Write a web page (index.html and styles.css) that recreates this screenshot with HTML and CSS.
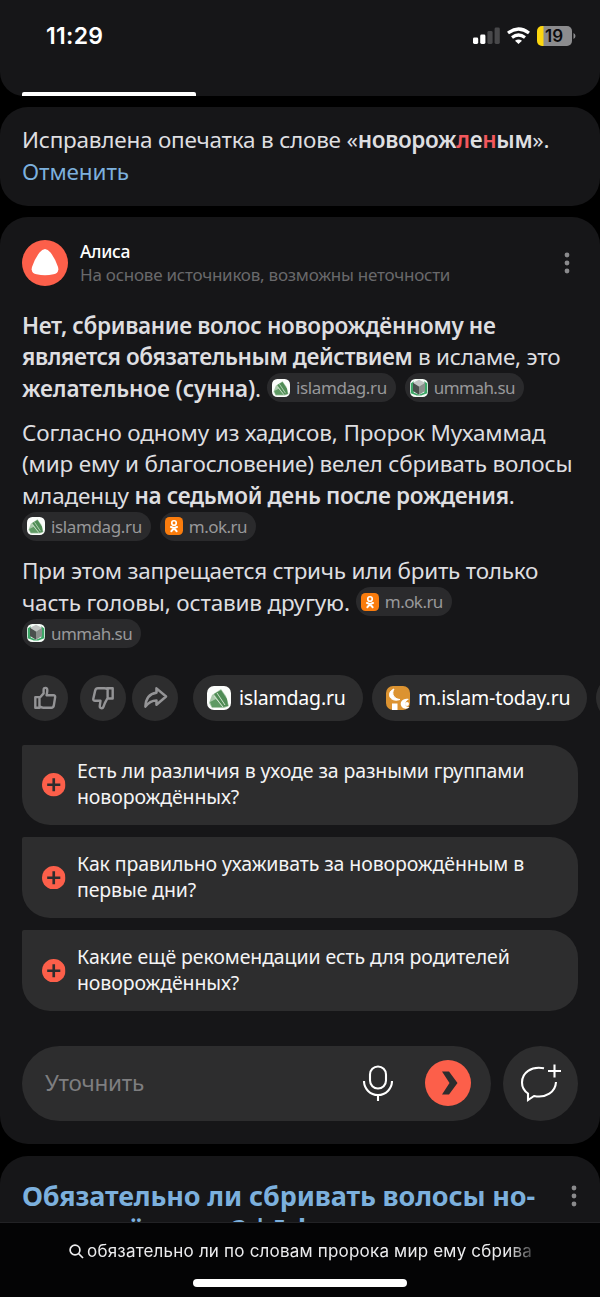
FILE: index.html
```html
<!DOCTYPE html>
<html lang="ru">
<head>
<meta charset="utf-8">
<title>Поиск</title>
<link rel="stylesheet" href="styles.css">
</head>
<body>
<svg width="0" height="0" class="defs">
  <symbol id="leaf" viewBox="0 0 24 24"><rect width="24" height="24" rx="7" fill="#fbfdfb"/><path d="M2 17 5 9l9-6 5 7 3 10-5 2H5Z" fill="#a9c9aa"/><path d="M7 8 14 4l6 9 1 7-5 1Z" fill="#4f8c55"/><path d="M3 16 9 13l7 8H5Z" fill="#5f9a64"/><path d="m7 10 9 11M10 7l8 12" stroke="#cfe3ce" stroke-width="1"/></symbol>
  <symbol id="cube" viewBox="0 0 24 24"><rect width="24" height="24" rx="7" fill="#f4fbf6"/><path d="M1 6 5 3v15l7 3 7-3V3l4 3v13l-8 3H9l-8-3Z" fill="#3da767"/><path d="m4 5 8-4 8 4-8 5Z" fill="#c1c5c3"/><path d="m4 5 8 5v11l-8-5Z" fill="#4a504d"/><path d="m20 5-8 5v11l8-5Z" fill="#8a908c"/></symbol>
  <symbol id="ok" viewBox="0 0 24 24"><rect width="24" height="24" rx="6" fill="#fa7c0d"/><circle cx="12" cy="8" r="3" fill="none" stroke="#fff" stroke-width="2.2"/><path d="M7.800 13.200q4.200 2.500 8.400 0M12 15l-3.600 4M12 15l3.600 4" fill="none" stroke="#fff" stroke-width="2.5" stroke-linecap="round"/></symbol>
  <symbol id="moon" viewBox="0 0 24 24"><rect width="24" height="24" rx="7" fill="#dc9331"/><path d="M8 3C0 6 3 17 14 13.500 8 13 5 8 8 3Z" fill="#fff" stroke="#fff"/><path d="M6 17.500h5.500V24H6ZM23 13c-6-1.500-10 3-7.500 7.500 2.500 3.500 7 2 8 .5-5 .5-6-5-.5-8Z" fill="#fff"/><circle cx="21" cy="18" r="2" fill="#fff"/></symbol>
  <symbol id="plus" viewBox="0 0 24 24"><circle cx="12" cy="12" r="12" fill="#fc5f4a"/><path d="M12 5.300v13.400M5.300 12h13.400" stroke="#2d2d2e" stroke-width="2.7"/></symbol>
  <symbol id="dots" viewBox="0 0 6 22"><circle cx="3" cy="3" r="2.4"/><circle cx="3" cy="11" r="2.4"/><circle cx="3" cy="19" r="2.4"/></symbol>
</svg>
<main class="phone">
  <div class="results">
    <header class="card top">
      <div class="status">
        <span class="time">11:29</span>
        <svg width="104" height="22" viewBox="0 0 104 22"><g fill="#fff"><rect x="0" y="12.500" width="5.200" height="6.500" rx="1.400"/><rect x="7.200" y="9.500" width="5.200" height="9.500" rx="1.400"/></g><g fill="#48484a"><rect x="14.400" y="6" width="5.200" height="13" rx="1.400"/><rect x="21.600" y="2.500" width="5.200" height="16.500" rx="1.400"/></g><g fill="none" stroke="#fff" stroke-width="3.200"><path d="M35 8q10.500-8 21 0M39 12.500q6.500-5 13 0"/></g><path d="m42 15.800q3.500-2.600 7 0L45.500 19Z" fill="#fff"/><path d="M69 1h25a5 5 0 0 1 5 5v10a5 5 0 0 1-5 5H69Z" fill="#8c8c8e"/><path d="M70.500 1v20H69a5 5 0 0 1-5-5V6a5 5 0 0 1 5-5Z" fill="#fcd60f"/><path d="M100.500 8q2 1 2 3t-2 3Z" fill="#8c8c8e"/><text class="charge" x="81" y="17" text-anchor="middle">19</text></svg>
      </div>
      <div class="tab-line"></div>
    </header>
    <section class="card typo">
      <div>Исправлена опечатка в слове «<b>новорож<i>л</i>е<i>н</i>ым</b>».</div>
      <div><a class="link">Отменить</a></div>
    </section>
    <section class="card alice">
      <div class="head">
        <svg width="46" height="46" viewBox="0 0 46 46"><circle cx="23" cy="23" r="23" fill="#fc5f4a"/><path d="M17.500 12.500q5.500-7 11 0 5 6.500 7.500 14.500c1.200 4.500-1 6.600-4.500 7.300q-8.500 1.700-17 0c-3.500-.7-5.700-2.800-4.500-7.300q2.500-8 7.500-14.500Z" fill="#fff"/></svg>
        <div class="who"><div class="name">Алиса</div><div class="sub">На основе источников, возможны неточности</div></div>
        <svg class="dots" width="6" height="22"><use href="#dots"/></svg>
      </div>
      <div class="answer">
        <p>
          <span class="line"><b>Нет, сбривание волос новорождённому не</b></span>
          <span class="line tight"><span><b>является обязательным действием</b> в исламе, это</span></span>
          <span class="line"><span><b class="loose">желательное (сунна)</b>.</span><span class="chip"><svg><use href="#leaf"/></svg>islamdag.ru</span><span class="chip narrow"><svg><use href="#cube"/></svg>ummah.su</span></span>
        </p>
        <p>
          <span class="line">Согласно одному из хадисов, Пророк Мухаммад</span>
          <span class="line">(мир ему и благословение) велел сбривать волосы</span>
          <span class="line"><span>младенцу <b>на седьмой день после рождения</b>.</span></span>
          <span class="line"><span class="chip"><svg><use href="#leaf"/></svg>islamdag.ru</span><span class="chip narrow"><svg><use href="#ok"/></svg>m.ok.ru</span></span>
        </p>
        <p>
          <span class="line tight">При этом запрещается стричь или брить только</span>
          <span class="line"><span>часть головы, оставив другую.</span><span class="chip narrow"><svg><use href="#ok"/></svg>m.ok.ru</span></span>
          <span class="line"><span class="chip narrow"><svg><use href="#cube"/></svg>ummah.su</span></span>
        </p>
      </div>
      <div class="actions">
        <span class="round"><svg width="24" height="24" viewBox="0 0 26 26"><path d="M2.500 12h4.500v11.500H2.500ZM7 13l4.500-5V4c0-3 4-2.500 4 .5 0 2-.5 4-.8 5.500h7.500q2 0 1.800 2l-1.500 9.500q-.4 2-2.500 2h-9q-2 0-4-1.500"/></svg></span>
        <span class="round down"><svg width="24" height="24" viewBox="0 0 26 26"><path d="M23.500 13.500H18V2.500h5.500ZM18 13l-3 5.500-1.500 4c-1 2.600-4.300 1.600-4-1l.8-5.500H4.500q-2.400 0-2-2.200L4.500 5q.7-2.500 3-2.500h7q2 0 3.500 1"/></svg></span>
        <span class="round share"><svg width="25" height="25" viewBox="0 0 26 26"><path d="M14 3.500 24 12 14 20.500V16q-7 0-11.500 6.500Q3 9.500 14 8Z"/></svg></span>
        <span class="source"><svg><use href="#leaf"/></svg>islamdag.ru</span>
        <span class="source today"><svg><use href="#moon"/></svg>m.islam-today.ru</span>
        <span class="source"></span>
      </div>
      <div class="suggestions">
        <div class="suggest"><svg><use href="#plus"/></svg><div>Есть ли различия в уходе за разными группами<br>новорождённых?</div></div>
        <div class="suggest"><svg><use href="#plus"/></svg><div>Как правильно ухаживать за новорождённым в<br>первые дни?</div></div>
        <div class="suggest"><svg><use href="#plus"/></svg><div>Какие ещё рекомендации есть для родителей<br>новорождённых?</div></div>
      </div>
      <div class="ask">
        <div class="field"><span class="hint">Уточнить</span>
          <svg class="mic" width="30" height="37" viewBox="0 0 30 37"><path d="M7 9.500a8 8 0 0 1 16 0v6a8 8 0 0 1-16 0ZM1 16a14 14 0 0 0 28 0M15 30v6"/></svg>
          <svg width="46" height="46" viewBox="0 0 46 46"><circle cx="23" cy="23" r="23" fill="#fc5f4a"/><path d="M17 11.500h7L32.500 23 24 34.500h-7L24.500 23Z" fill="#2d2d2e"/></svg>
        </div>
        <span class="chat"><svg width="42" height="40" viewBox="0 0 42 40"><path d="M24 5.300C11 3 2 9.500 2 19.500q0 7 6 11v6.500l6-4c12 2.500 21.500-4 22-14M28 8h13M34.500 1.500v13"/></svg></span>
      </div>
    </section>
    <section class="card result">
      <div class="title">Обязательно ли сбривать волосы но-<br>ворождённому? | Islam</div>
      <svg class="dots" width="6" height="22"><use href="#dots"/></svg>
    </section>
  </div>
  <footer class="bar">
    <div class="query"><svg width="15" height="15" viewBox="0 0 15 15"><circle cx="6" cy="6" r="4.900"/><path d="m9.500 9.500 4.500 4.500"/></svg><span>обязательно ли по словам пророка мир ему сбрива</span></div>
    <div class="home"></div>
  </footer>
</main>
</body>
</html>
```
FILE: styles.css
```css
* { box-sizing: border-box; }
body { margin: 0; background: #000; }
svg { display: block; flex: none; }
.defs { display: none; }
b { font-weight: 600; letter-spacing: -0.33px; }
p { margin: 0; }

.phone {
  width: 600px;
  height: 1297px;
  display: flex;
  flex-direction: column;
  overflow: hidden;
  font-family: "Noto Sans", sans-serif;
  color: #dedee0;
  white-space: nowrap;
}
.results {
  flex: 1;
  min-height: 0;
  overflow: hidden;
  display: flex;
  flex-direction: column;
  gap: 11.5px;
}
.card { flex: none; background: #161618; border-radius: 28px; }

.top {
  height: 95.5px;
  padding: 0 22px;
  border-radius: 0 0 24px 24px;
  display: flex;
  flex-direction: column;
  justify-content: space-between;
}
.status {
  display: flex;
  justify-content: space-between;
  padding: 22px 1px 0 24px;
  color: #fff;
}
.status svg { margin-top: 3px; }
.time { font: 600 23px/28px Inter, sans-serif; letter-spacing: 0.3px; }
.charge { font: 600 17px Inter, sans-serif; fill: #0c0c0e; }
.tab-line { width: 173.5px; height: 3.5px; border-radius: 2px 2px 0 0; background: #fff; }

.typo {
  height: 98.5px;
  padding: 17px 22px 0;
  font-size: 22.5px;
  line-height: 32px;
  letter-spacing: -0.22px;
}
.typo i { font-style: normal; color: #f2585d; }
.link { color: #7cb0dd; letter-spacing: -0.1px; }

.alice { height: 927px; padding: 23px 22px 0; }
.head { display: flex; align-items: center; }
.who { flex: 1; margin-left: 12px; }
.name { font-size: 17.5px; font-weight: 500; line-height: 23px; letter-spacing: -0.35px; color: #fff; }
.sub { font-size: 17px; line-height: 23px; letter-spacing: -0.24px; color: #69696b; }
.dots { fill: #8a8a8c; }
.head .dots { margin-right: 8.5px; }

.answer {
  display: flex;
  flex-direction: column;
  gap: 12.5px;
  margin-top: 23.5px;
  font-size: 22.5px;
  letter-spacing: -0.17px;
}
.line { display: flex; height: 31.5px; line-height: 31.5px; white-space: pre; }
.tight { letter-spacing: -0.24px; }
.tight b { letter-spacing: -0.4px; }
.loose { letter-spacing: -0.1px; }
.chip {
  display: flex;
  align-items: center;
  gap: 6px;
  height: 29px;
  margin-top: 0.8px;
  padding: 0 9px 0 5px;
  border-radius: 15px;
  background: #2a2a2c;
  color: #98989a;
  font-size: 17px;
  letter-spacing: -0.37px;
}
.narrow { letter-spacing: -0.55px; }
.chip svg { width: 18px; height: 18px; }
.chip + .chip { margin-left: 9px; }
span:not(.chip) + .chip { margin-left: 6px; }

.actions { display: flex; margin-top: 25px; height: 46px; overflow: hidden; margin-right: -22px; }
.round {
  flex: none;
  width: 46px;
  height: 46px;
  border-radius: 50%;
  background: #2d2d2e;
  display: grid;
  place-items: center;
}
.round svg { fill: none; stroke: #949496; stroke-width: 2.6; stroke-linejoin: round; }
.down { margin-left: 12px; }
.share { margin: 0 15px 0 6px; }
.source {
  flex: none;
  display: flex;
  align-items: center;
  gap: 8px;
  width: 170px;
  padding-left: 14px;
  border-radius: 23px;
  background: #2d2d2e;
  color: #fff;
  font-size: 19.5px;
  letter-spacing: -0.2px;
}
.source svg { width: 24px; height: 24px; }
.today { width: 215px; margin: 0 9px; letter-spacing: -0.13px; }

.suggestions { display: flex; flex-direction: column; gap: 12px; margin-top: 24px; }
.suggest {
  height: 80.8px;
  display: flex;
  align-items: center;
  gap: 11.5px;
  padding-left: 20px;
  border-radius: 2px 28px 28px 28px;
  background: #2d2d2e;
  color: #f4f4f5;
  font-size: 19.5px;
  line-height: 26px;
  letter-spacing: -0.11px;
}
.suggest svg { width: 23.5px; height: 23.5px; }
.suggest div { padding-bottom: 1.5px; }

.ask { display: flex; gap: 12px; margin-top: 35px; height: 75px; }
.field {
  flex: 1;
  display: flex;
  align-items: center;
  padding: 0 20px 0 23px;
  border-radius: 38px;
  background: #2d2d2e;
}
.hint { flex: 1; padding-bottom: 1.5px; font-size: 22.5px; letter-spacing: -0.25px; color: #7e7e80; }
.mic { margin-right: 32px; }
.mic path, .chat path { fill: none; stroke: #fff; stroke-width: 2.1; }
.chat {
  width: 75px;
  border-radius: 50%;
  background: #2d2d2e;
  display: grid;
  place-items: center;
}

.result { display: flex; justify-content: space-between; padding: 24.5px 23.5px 0 22px; height: 130px; }
.title { font-size: 27px; font-weight: 700; line-height: 32.5px; letter-spacing: -0.14px; color: #7cb0dd; }
.result .dots { margin-top: 5px; }

.bar {
  height: 75px;
  border-top: 1.5px solid #222225;
  background: #040405;
  display: flex;
  flex-direction: column;
  align-items: center;
}
.query {
  width: 462px;
  height: 56px;
  display: flex;
  align-items: center;
  gap: 3px;
  overflow: hidden;
  color: #ececee;
  font: 17px Inter, sans-serif;
  letter-spacing: 0.2px;
  mask-image: linear-gradient(90deg, #000 95%, rgba(0, 0, 0, 0.3));
}
.query svg { fill: none; stroke: #ececee; stroke-width: 1.7; }
.home { width: 214px; height: 7.5px; border-radius: 4px; background: #fff; }
```
